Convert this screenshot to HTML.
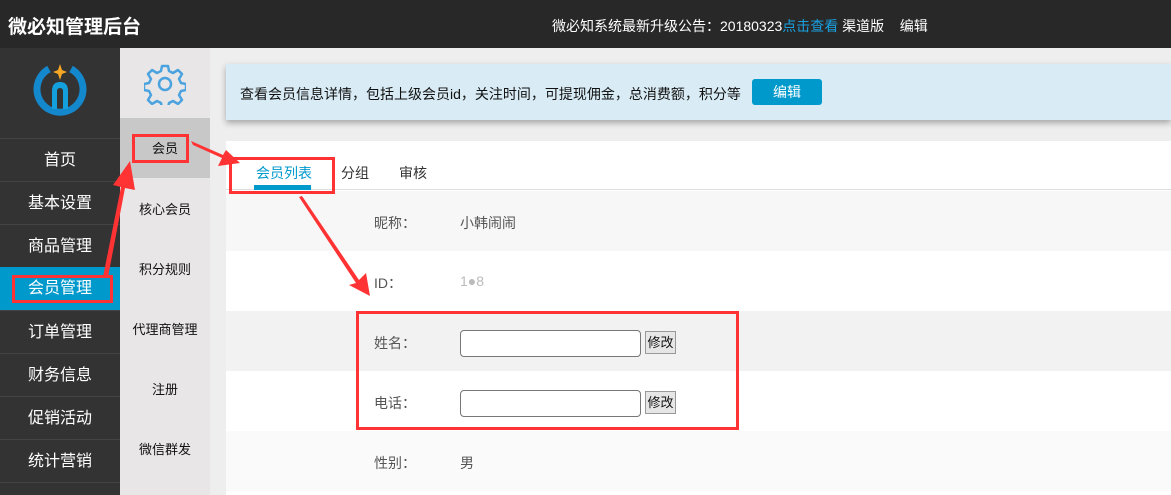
<!DOCTYPE html>
<html><head><meta charset="utf-8"><style>
*{margin:0;padding:0;box-sizing:border-box}
html,body{width:1171px;height:495px;overflow:hidden}
body{background:#eee;font-family:"Liberation Sans","Noto Sans CJK SC",sans-serif;position:relative;font-size:14px}
.hd{position:absolute;left:0;top:0;width:1171px;height:48px;background:#282828;color:#fff}
.hd .t{position:absolute;left:8px;top:12px;font-size:19px;font-weight:bold}
.hd .n{position:absolute;left:552px;top:16px;font-size:14px}
.side{position:absolute;left:0;top:48px;width:120px;height:447px;background:#333;overflow:hidden}
.side .it{position:absolute;left:0;width:120px;height:43px;line-height:43px;text-align:center;color:#fff;font-size:16px;border-top:1px solid #444}
.side2{position:absolute;left:120px;top:48px;width:90px;height:447px;background:#e8e6e6;overflow:hidden}
.side2 .it{position:absolute;left:0;width:90px;height:60px;line-height:60px;text-align:center;color:#111;font-size:13px}
.note{position:absolute;left:226px;top:64px;width:945px;height:56px;background:#d9ecf5;box-shadow:0 3px 6px rgba(0,0,0,.3);font-size:14px;color:#111}
.note span{position:absolute;left:14px;top:20px}
.note b{position:absolute;left:526px;top:15px;width:70px;height:26px;background:#0099cc;color:#fff;border-radius:3px;font-weight:normal;text-align:center;line-height:26px;font-size:14px}
.panel{position:absolute;left:226px;top:141px;width:945px;height:354px;background:#fff;overflow:hidden}
.tabs{position:absolute;left:0;top:0;width:945px;height:49px;border-bottom:1px solid #ddd}
.tab{position:absolute;top:22px;font-size:14px;color:#333}
.row{position:absolute;left:0;width:945px;height:60px;font-size:14px;color:#555}
.row .l{position:absolute;left:148px;top:22px}
.row .v{position:absolute;left:234px;top:22px}
.inp{position:absolute;left:234px;top:19px;width:181px;height:27px;border:1px solid #777;border-radius:4px;background:#fff}
.btn{position:absolute;left:419px;top:20px;width:31px;height:23px;border:1px solid #999;background:#e6e6e6;font-size:13px;color:#111;text-align:center;line-height:21px}
.rb{position:absolute;border:3px solid #f33}
</style></head><body>
<div class="hd"><div class="t">微必知管理后台</div>
<div class="n">微必知系统最新升级公告：20180323<span style="color:#1aa0e0">点击查看</span> 渠道版&nbsp;&nbsp;&nbsp;&nbsp;编辑</div></div>
<div class="side">
<svg style="position:absolute;left:33px;top:15px" width="54" height="54" viewBox="0 0 54 54">
<path d="M16 6 A23 23 0 1 0 38 6" fill="none" stroke="#1488cc" stroke-width="7"/>
<path d="M19 46 V28 Q19 19 27 19 Q35 19 35 28 V46 H30 V28 Q30 25 27 25 Q24 25 24 28 V46 Z" fill="#14a0dc"/>
<path d="M27 1 L29 7 L34 9 L29 11 L27 17 L25 11 L20 9 L25 7 Z" fill="#f5a623"/>
</svg>
<div class="it" style="top:90px">首页</div>
<div class="it" style="top:133px">基本设置</div>
<div class="it" style="top:176px">商品管理</div>
<div class="it" style="top:219px;background:#0099cc;border-top:none">会员管理</div>
<div class="it" style="top:262px">订单管理</div>
<div class="it" style="top:305px">财务信息</div>
<div class="it" style="top:348px">促销活动</div>
<div class="it" style="top:391px">统计营销</div>
<div class="it" style="top:434px;height:13px"></div>
</div>
<div class="side2">
<svg style="position:absolute;left:24px;top:15px" width="42" height="42" viewBox="0 0 42 42"><path d="M18 3h6l1 5 4 2 5-3 4 4-3 5 2 4 5 1v6l-5 1-2 4 3 5-4 4-5-3-4 2-1 5h-6l-1-5-4-2-5 3-4-4 3-5-2-4-5-1v-6l5-1 2-4-3-5 4-4 5 3 4-2z" fill="none" stroke="#4aa3df" stroke-width="2.5" stroke-linejoin="round"/><circle cx="21" cy="21" r="6" fill="none" stroke="#4aa3df" stroke-width="2.5"/></svg>
<div class="it" style="top:70px;background:#c8c8c8;line-height:62px">会员</div>
<div class="it" style="top:132px">核心会员</div>
<div class="it" style="top:192px">积分规则</div>
<div class="it" style="top:252px">代理商管理</div>
<div class="it" style="top:312px">注册</div>
<div class="it" style="top:372px">微信群发</div>
</div>
<div class="note"><span>查看会员信息详情，包括上级会员id，关注时间，可提现佣金，总消费额，积分等</span><b>编辑</b></div>
<div class="panel">
<div class="tabs">
<div class="tab" style="left:30px;color:#0099cc">会员列表</div>
<div style="position:absolute;left:28px;top:44px;width:57px;height:5px;background:#0099cc"></div>
<div class="tab" style="left:115px">分组</div>
<div class="tab" style="left:173px">审核</div>
</div>
<div class="row" style="top:50px;background:#f7f7f7"><span class="l">昵称：</span><span class="v">小韩闹闹</span></div>
<div class="row" style="top:110px;background:#fff"><span class="l">ID：</span><span class="v" style="color:#bbb">1●8</span></div>
<div class="row" style="top:170px;background:#f2f2f2"><span class="l">姓名：</span><div class="inp"></div><div class="btn">修改</div></div>
<div class="row" style="top:230px;background:#fff"><span class="l">电话：</span><div class="inp"></div><div class="btn">修改</div></div>
<div class="row" style="top:290px;background:#fafafa"><span class="l">性别：</span><span class="v">男</span></div>
</div>
<div class="rb" style="left:12px;top:275px;width:101px;height:28px"></div>
<div class="rb" style="left:132px;top:134px;width:57px;height:29px"></div>
<div class="rb" style="left:229px;top:157px;width:106px;height:37px"></div>
<div class="rb" style="left:356px;top:311px;width:383px;height:119px"></div>
<svg style="position:absolute;left:0;top:0" width="1171" height="495">
<polygon points="103,277 108,277 125,188 135,190 130,161 113,185 121,187" fill="#f33"/>
<polygon points="191,141 193,145 222,158 218,166 240,163 226,150 223,155" fill="#f33"/>
<polygon points="299,197 302,196 359,280 366,273 370,296 349,285 356,283" fill="#f33"/>
</svg>
</body></html>
